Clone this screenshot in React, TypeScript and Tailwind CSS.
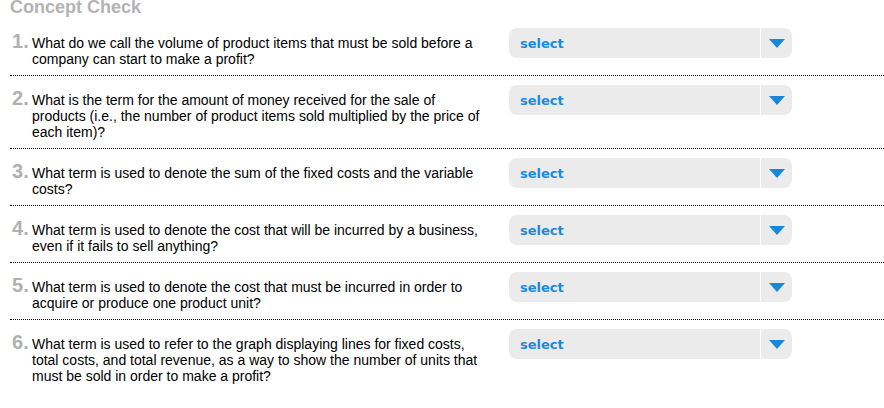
const questions = [
  'What do we call the volume of product items that must be sold before a company can start to make a profit?',
  'What is the term for the amount of money received for the sale of products (i.e., the number of product items sold multiplied by the price of each item)?',
  'What term is used to denote the sum of the fixed costs and the variable costs?',
  'What term is used to denote the cost that will be incurred by a business, even if it fails to sell anything?',
  'What term is used to denote the cost that must be incurred in order to acquire or produce one product unit?',
  'What term is used to refer to the graph displaying lines for fixed costs, total costs, and total revenue, as a way to show the number of units that must be sold in order to make a profit?',
]

function Select() {
  return (
    <div className="flex h-[30px] w-[283px] shrink-0 overflow-hidden rounded-[8px] bg-[#ebebeb]">
      <div className="flex flex-1 items-center pl-[11px] pt-px font-['DejaVu_Sans',sans-serif] text-[13px] font-bold text-[#1a8ae0]">
        select
      </div>
      <div className="w-px bg-white" />
      <div className="flex w-[31px] items-center justify-center">
        <svg width="16" height="9" viewBox="0 0 16 9">
          <path d="M0 0H16L8 9Z" fill="#1b87d9" />
        </svg>
      </div>
    </div>
  )
}

export default function App() {
  return (
    <div className="h-[408px] w-[884px] overflow-hidden bg-white pl-[10px] font-['Liberation_Sans',Arial,sans-serif]">
      <h1 className="-mt-[4px] text-[18px] font-bold leading-[23px] text-[#b3b3b3]">Concept Check</h1>
      {questions.map((q, i) => (
        <div
          key={i}
          className={`flex pt-[9px] pb-[8px] ${i < questions.length - 1 ? 'border-b border-dotted border-black' : ''}`}
        >
          <div className="flex w-[499px] items-baseline pt-[7px]">
            <span className="w-[22px] shrink-0 pl-[2px] text-[20px] font-bold leading-[12px] text-[#b0b0b0]">
              {i + 1}.
            </span>
            <p className="w-[458px] text-[14px] leading-[16px] text-black">{q}</p>
          </div>
          <Select />
        </div>
      ))}
    </div>
  )
}
